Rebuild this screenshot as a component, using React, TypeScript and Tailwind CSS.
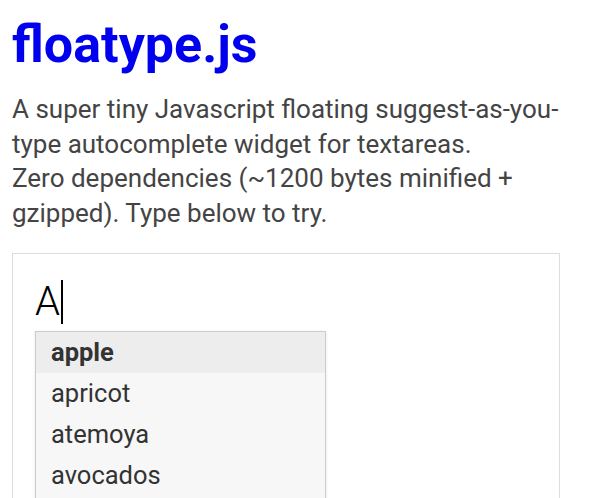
export default function App() {
  const items = ['apple', 'apricot', 'atemoya', 'avocados']

  return (
    <div className="h-[498px] overflow-hidden bg-white px-3 font-['Roboto',sans-serif]">
      <h1 className="pt-[15px] text-[52px] font-bold leading-[60px] text-[#0000ee]">floatype.js</h1>
      <p className="mt-[17px] w-[570px] text-[26px] leading-[34.7px] text-[#444]">
        A super tiny Javascript floating suggest-as-you-type autocomplete widget for textareas.
        <br />
        Zero dependencies (~1200 bytes minified + gzipped). Type below to try.
      </p>

      <div className="mt-[22px] h-[300px] w-[548px] border border-[#ddd] px-[22px] pt-[24px]">
        <div className="flex h-[48px] items-center text-[40px] leading-none text-black font-['Roboto',sans-serif] font-light">
          <span>A</span>
          <span className="ml-[1px] h-[44px] w-[2px] bg-black" />
        </div>
        <ul className="mt-[5px] h-[200px] w-[291px] border border-[#ccc] bg-[#f7f7f7] shadow-[0_1px_3px_rgba(0,0,0,0.1)]">
          {items.map((item, i) => (
            <li
              key={item}
              className={`h-[41px] px-[15px] text-[25.5px] leading-[41px] text-[#333] ${
                i === 0 ? 'bg-[#ededed] font-bold' : ''
              }`}
            >
              {item}
            </li>
          ))}
        </ul>
      </div>
    </div>
  )
}
